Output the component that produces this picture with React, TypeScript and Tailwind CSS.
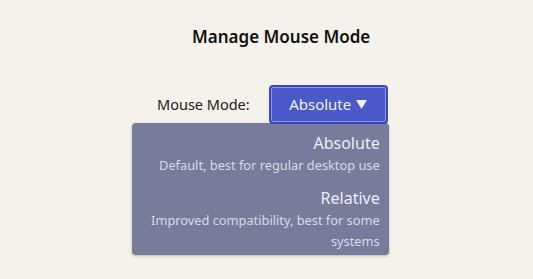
import React from "react";

export default function App() {
  return (
    <div
      className="w-[533px] h-[279px] bg-[#f5f2eb] relative overflow-hidden"
      style={{ fontFamily: '"Noto Sans", "Open Sans", sans-serif' }}
    >
      <div className="pt-[24px] pl-[192px] text-[17px] leading-[26px] font-semibold text-[#111]">
        Manage Mouse Mode
      </div>
      <div className="mt-[35px] flex items-center pl-[157px] gap-[19px]">
        <span className="text-[14.5px] text-[#222]">Mouse Mode:</span>
        <div className="relative">
          <button className="relative z-10 w-[119px] h-[39px] rounded-[4px] bg-[#3d49b8] p-[2px]">
            <div className="w-full h-full rounded-[2px] border border-[#8c95e3] bg-[#4a58c9] flex items-center justify-center gap-[5px] text-[15px] text-[#eef0ff]">
              <span>Absolute</span>
              <svg width="11" height="9" viewBox="0 0 11 9">
                <path d="M0 0 H11 L5.5 9 Z" fill="#eef0ff" />
              </svg>
            </div>
          </button>
          <div className="absolute z-0 right-[-1px] top-[38px] w-[257px] rounded-[4px] bg-[#777c9b] shadow-[0_1px_3px_rgba(0,0,0,0.25)] pt-[8px] pb-[3px] pr-[9px] pl-[10px] text-right">
            <div className="text-[16px] leading-[24px] text-[#eceef6]">Absolute</div>
            <div className="text-[12.8px] leading-[21px] text-[#d7d9e6]">
              Default, best for regular desktop use
            </div>
            <div className="mt-[10px] text-[16px] leading-[24px] text-[#eceef6]">Relative</div>
            <div className="text-[12.8px] leading-[21px] text-[#d7d9e6]">
              Improved compatibility, best for some systems
            </div>
          </div>
        </div>
      </div>
    </div>
  );
}
